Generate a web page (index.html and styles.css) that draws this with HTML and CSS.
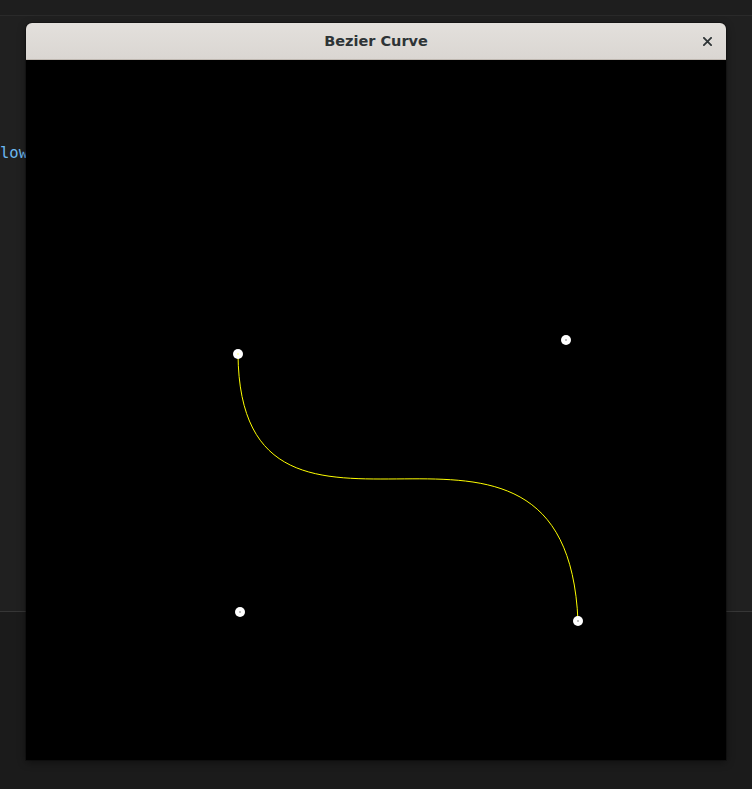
FILE: index.html
```html
<!DOCTYPE html>
<html>
<head>
<meta charset="utf-8">
<link rel="stylesheet" href="styles.css">
</head>
<body>
<div class="desktop">
  <div class="topbar"></div>
  <div class="editor">
    <div class="code-line">low</div>
  </div>
  <div class="panel"></div>

  <div class="window">
    <div class="titlebar">
      <span class="title">Bezier Curve</span>
      <span class="close">
        <svg width="10" height="10" viewBox="0 0 10 10"><path d="M1 1 L9 9 M9 1 L1 9" stroke="#2e3436" stroke-width="2" stroke-linecap="square"/></svg>
      </span>
    </div>
    <div class="canvas">
      <svg width="700" height="700" viewBox="0 0 700 700">
        <path d="M212 294 C214 552 540 280 552 561" fill="none" stroke="#ffff00" stroke-width="1"/>
        <circle cx="212" cy="294" r="5" fill="#fff"/>
        <circle cx="214" cy="552" r="5" fill="#fff"/>
        <circle cx="540" cy="280" r="5" fill="#fff"/>
        <circle cx="552" cy="561" r="5" fill="#fff"/>
        <rect x="211.5" y="293.5" width="1" height="1" fill="#ffff00"/>
        <rect x="213.5" y="551.5" width="1" height="1" fill="#000"/>
        <rect x="539.5" y="279.5" width="1" height="1" fill="#000"/>
        <rect x="551.5" y="560.5" width="1" height="1" fill="#000"/>
      </svg>
    </div>
  </div>
</div>
</body>
</html>
```
FILE: styles.css
```css
html, body {
  margin: 0;
  padding: 0;
  background: #1b1b1b;
}
.desktop {
  position: relative;
  width: 752px;
  height: 789px;
  overflow: hidden;
  display: flex;
  flex-direction: column;
}
.topbar {
  height: 15px;
  background: #1e1e1e;
  border-bottom: 1px solid #2a2a2a;
}
.editor {
  height: 596px;
  background: #202020;
  border-bottom: 1px solid #363636;
  padding-top: 127px;
  box-sizing: border-box;
}
.code-line {
  font-family: "DejaVu Sans Mono", monospace;
  font-size: 15.5px;
  line-height: 20px;
  color: #6cb8f0;
  margin-left: 0;
}
.panel {
  flex: 1;
  background: #1b1b1b;
}
.window {
  position: absolute;
  left: 26px;
  top: 23px;
  width: 700px;
  border-radius: 6px 6px 0 0;
  overflow: hidden;
  box-shadow: 0 2px 8px rgba(0,0,0,0.45), 0 0 0 1px rgba(0,0,0,0.25);
}
.titlebar {
  height: 36px;
  background: linear-gradient(#e3e0dc, #dad6d2);
  border-bottom: 1px solid #bfb8b1;
  display: flex;
  align-items: center;
  justify-content: center;
  position: relative;
}
.title {
  font-family: "DejaVu Sans", sans-serif;
  font-weight: bold;
  font-size: 14.5px;
  color: #2e3436;
}
.close {
  position: absolute;
  right: 14px;
  top: 14px;
  width: 9px;
  height: 9px;
  display: flex;
}
.close svg {
  width: 9px;
  height: 9px;
}
.canvas {
  height: 700px;
  background: #000;
}
.canvas svg {
  display: block;
}
```
